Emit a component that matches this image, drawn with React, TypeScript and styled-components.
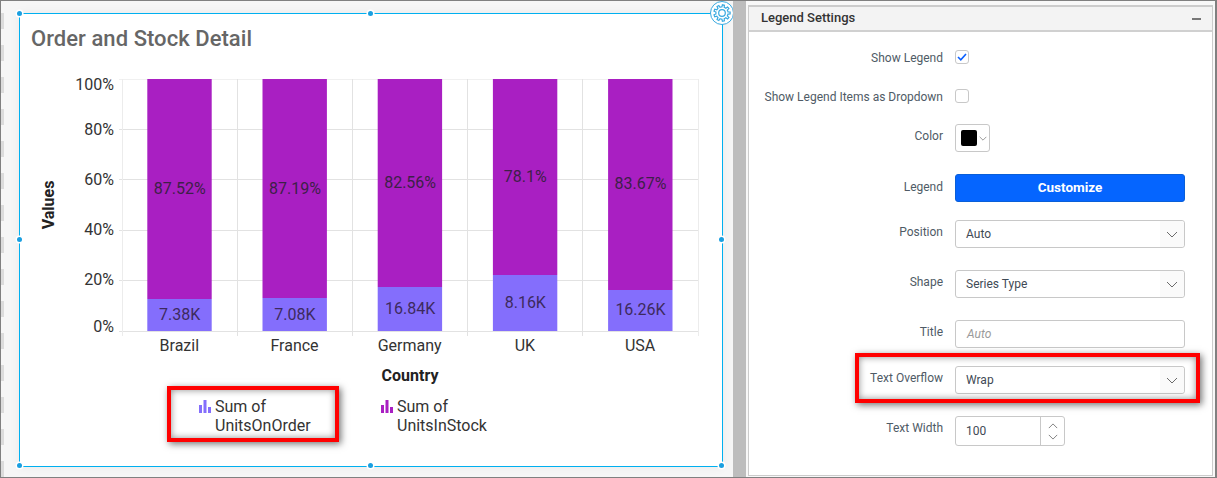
import React from "react";
import styled, { createGlobalStyle } from "styled-components";

const Global = createGlobalStyle`
  html, body { margin: 0; padding: 0; background: #fff; }
  body { font-family: Roboto, "Liberation Sans", sans-serif; overflow: hidden; }
  * { box-sizing: border-box; }
`;

const Frame = styled.div`
  width: 1217px; height: 478px;
  display: flex;
  border: 1px solid #808080;
  border-right-width: 2px;
  background: #f6f6f6;
  overflow: hidden;
`;
const Ruler = styled.div`
  flex: 0 0 3px; height: 100%;
  background: repeating-linear-gradient(to bottom, #f6f6f6 0 12px, #dcdcdc 12px 28px, #f6f6f6 28px 32px);
`;
const Canvas = styled.div`
  flex: 0 0 729px;
  padding: 12px 0 0 15px;
  position: relative;
  overflow: hidden;
`;
const Widget = styled.div`
  position: relative;
  width: 704px; height: 454px;
  background: #fff;
  border: 1px solid #00b0f0;
  box-shadow: 0 0 10px rgba(0,0,0,.06);
`;
const WidgetTitle = styled.h1`
  margin: 0; height: 56px;
  padding: 11px 0 0 11px;
  font: 500 22px/28px Roboto, sans-serif;
  letter-spacing: .05px;
  color: #666;
`;
const ChartSvg = styled.svg`
  display: block;
  text { font-family: Roboto, sans-serif; }
`;
const Legend = styled.div`
  display: flex;
  padding: 12px 0 0 179px;
`;
const LegendItem = styled.div`
  width: 182px;
  display: flex;
  gap: 4px;
  font: 400 16px/19px Roboto, sans-serif;
  color: #333;
`;
const LegendText = styled.span`
  width: 110px;
`;
const LegendIcon = styled.svg`
  flex: none; margin-top: 3px;
`;
const Handle = styled.span<{ $x: number; $y: number }>`
  position: absolute;
  left: ${(p) => p.$x}%; top: ${(p) => p.$y}%;
  width: 5px; height: 5px;
  margin: -3px 0 0 -3px;
  border-radius: 50%;
  background: #1a9fe0;
  box-shadow: 0 0 0 1.5px #fff;
`;
const GearBadge = styled.div`
  position: absolute;
  right: -12px; top: -13px;
  width: 24px; height: 24px;
  border-radius: 50%;
  background: #fff;
  border: 1px solid #39a9e0;
  display: flex; align-items: center; justify-content: center;
`;
const Highlight = styled.div<{ $x: number; $y: number; $w: number; $h: number }>`
  position: absolute;
  left: ${(p) => p.$x}px; top: ${(p) => p.$y}px;
  width: ${(p) => p.$w}px; height: ${(p) => p.$h}px;
  border: 4px solid #f00;
  box-shadow: 2px 2px 7px rgba(0,0,0,.55), inset 0 0 7px rgba(0,0,0,.45);
  pointer-events: none;
`;
const Splitter = styled.div`
  flex: 0 0 13px;
  background: #bdbdbd;
`;
const PanelWrap = styled.div`
  flex: 0 0 469px;
  padding: 4px 0 1px 2px;
  background: #f8f8f8;
`;
const Panel = styled.div`
  width: 465px; height: 100%;
  background: #fff;
  border: 1px solid #ccc;
  border-top-width: 2px;
`;
const PanelHeader = styled.div`
  height: 25px;
  background: #f3f3f3;
  border-bottom: 2px solid #d0d0d0;
  display: flex; align-items: center; justify-content: space-between;
  padding: 0 11px 1px 12px;
  font: 500 13px/16px Roboto, sans-serif;
  color: #333;
`;
const Collapse = styled.span`
  width: 9px; height: 2px; background: #777; margin-top: 2px;
`;
const Form = styled.div`
  display: flex; flex-direction: column;
`;
const Row = styled.div<{ $top: number }>`
  display: flex; align-items: center;
  margin-top: ${(p) => p.$top}px;
`;
const Label = styled.label<{ $up?: number; $down?: boolean }>`
  flex: 0 0 194px;
  text-align: right;
  font: 400 12px/14px Roboto, sans-serif;
  color: #4f5b66;
  padding-bottom: ${(p) => p.$up ?? 0}px;
  padding-top: ${(p) => (p.$down ? 1 : 0)}px;
  margin-bottom: ${(p) => (p.$down ? -1 : 0)}px;
  margin-right: 12px;
  white-space: nowrap;
`;
const Check = styled.span`
  width: 14px; height: 14px;
  border: 1px solid #c8c8c8;
  border-radius: 3px;
  background: #fff;
  display: flex; align-items: center; justify-content: center;
`;
const ColorPicker = styled.div`
  width: 35px; height: 28px;
  border: 1px solid #c8c8c8;
  border-radius: 3px;
  display: flex; align-items: center;
  padding-left: 5px; gap: 2px;
`;
const Swatch = styled.span`
  width: 16px; height: 16px;
  background: #000;
  border-radius: 2px;
`;
const Primary = styled.button`
  width: 230px; height: 28px;
  border: 1px solid #0a5fd8;
  border-radius: 3px;
  background: #0565ff;
  color: #fff;
  font: 700 13.5px/16px Roboto, sans-serif;
  padding: 0 0 2px;
`;
const Select = styled.div`
  width: 230px; height: 28px;
  border: 1px solid #c8c8c8;
  border-radius: 3px;
  display: flex; align-items: center;
  font: 400 12px/16px Roboto, sans-serif;
  color: #3f4a55;
  padding-left: 10px;
`;
const SelectValue = styled.span`
  flex: 1;
`;
const Arrow = styled.span`
  flex: 0 0 24px; align-self: stretch;
  background: #fafafa;
  border-radius: 0 3px 3px 0;
  display: flex; align-items: center; justify-content: center;
`;
const Placeholder = styled.span`
  font-style: italic; color: #9a9a9a;
  padding-left: 1px;
`;
const Spinner = styled.div`
  width: 110px; height: 30px;
  border: 1px solid #c8c8c8;
  border-radius: 3px;
  display: flex; align-items: center;
  font: 400 12px/16px Roboto, sans-serif;
  color: #3f4a55;
  padding-left: 10px;
`;
const SpinButtons = styled.span`
  flex: 0 0 24px; align-self: stretch;
  border-left: 1px solid #c8c8c8;
  display: flex; flex-direction: column; align-items: center; justify-content: center; gap: 5px;
`;

const Chev = ({ up, w = 12, c = "#6b6b6b" }: { up?: boolean; w?: number; c?: string }) => (
  <svg width={w} height={w / 2 + 1} viewBox="0 0 12 7" fill="none" stroke={c} strokeWidth="1">
    <polyline points={up ? "1,6 6,1 11,6" : "1,1 6,6 11,1"} />
  </svg>
);

const BarIcon = ({ c }: { c: string }) => (
  <LegendIcon width="12" height="13" viewBox="0 0 12 13" fill={c}>
    <rect x="0" y="5" width="3" height="8" />
    <rect x="4.5" y="0" width="3" height="13" />
    <rect x="9" y="7" width="3" height="6" />
  </LegendIcon>
);

const gearPath = (() => {
  const teeth = 9;
  const pts: string[] = [];
  for (let i = 0; i < teeth; i++) {
    const a = (i / teeth) * Math.PI * 2;
    const step = (Math.PI * 2) / teeth;
    const seq: [number, number][] = [
      [6.1, a - step * 0.5],
      [6.1, a - step * 0.28],
      [8.2, a - step * 0.18],
      [8.2, a + step * 0.18],
      [6.1, a + step * 0.28],
    ];
    seq.forEach(([r, t]) => pts.push(`${(9 + r * Math.cos(t)).toFixed(2)},${(9 + r * Math.sin(t)).toFixed(2)}`));
  }
  return `M${pts.join("L")}Z`;
})();

const Gear = () => (
  <svg width="18" height="18" viewBox="0 0 18 18" fill="none" stroke="#39a9e0" strokeWidth="1.2">
    <path d={gearPath} />
    <circle cx="9" cy="9" r="3.3" />
  </svg>
);

const bars = [
  { name: "Brazil", x: 147.3, top: 299, pct: "87.52%", py: 194, k: "7.38K", ky: 320 },
  { name: "France", x: 262.5, top: 298, pct: "87.19%", py: 194, k: "7.08K", ky: 320 },
  { name: "Germany", x: 377.7, top: 287, pct: "82.56%", py: 188, k: "16.84K", ky: 314 },
  { name: "UK", x: 492.9, top: 275, pct: "78.1%", py: 182, k: "8.16K", ky: 308 },
  { name: "USA", x: 608.1, top: 290, pct: "83.67%", py: 189, k: "16.26K", ky: 315 },
];
const ticks = [
  { t: "100%", y: 79, ly: 89.5 },
  { t: "80%", y: 129.4, ly: 134.5 },
  { t: "60%", y: 179.8, ly: 184.5 },
  { t: "40%", y: 230.2, ly: 234.5 },
  { t: "20%", y: 280.6, ly: 285 },
  { t: "0%", y: 331, ly: 331.5 },
];
const vLines = [122, 237.2, 352.4, 467.6, 582.8, 698];

const Chart = () => (
  <ChartSvg width="702" height="315" viewBox="20 70 702 315">
    {ticks.map((t, i) => (
      <g key={t.t}>
        <line x1="119" x2="698" y1={Math.floor(t.y) + 0.5} y2={Math.floor(t.y) + 0.5} stroke={i === 0 ? "#f0f0f0" : "#e2e2e2"} />
        <text x="114" y={t.ly} textAnchor="end" fontSize="16" fill="#333">{t.t}</text>
      </g>
    ))}
    {vLines.map((x, i) => (
      <line key={x} x1={Math.floor(x) + 0.5} x2={Math.floor(x) + 0.5} y1="79" y2="336" stroke={i === 0 || i === 5 ? "#ececec" : "#e2e2e2"} />
    ))}
    {bars.map((b) => (
      <g key={b.name}>
        <rect x={b.x} y={79} width={64.4} height={b.top - 79} fill="#a91fc2" />
        <rect x={b.x} y={b.top} width={64.4} height={331 - b.top} fill="#846efc" />
        <text x={b.x + 32.4} y={b.py} textAnchor="middle" fontSize="16" fill="#3d2048">{b.pct}</text>
        <text x={b.x + 32.4} y={b.ky} textAnchor="middle" fontSize="16" fill="#3d2a5e">{b.k}</text>
        <text x={b.x + 32} y={351} textAnchor="middle" fontSize="16" fill="#333">{b.name}</text>
      </g>
    ))}
    <text x="410" y="381" textAnchor="middle" fontSize="16" fontWeight="700" fill="#222">Country</text>
    <text transform="translate(54 205) rotate(-90)" textAnchor="middle" fontSize="16" fontWeight="700" fill="#222">Values</text>
  </ChartSvg>
);

const handles = [
  [0, 0], [50, 0], [0, 50], [100, 50], [0, 100], [50, 100], [100, 100],
];

export default function App() {
  return (
    <>
      <Global />
      <Frame>
        <Ruler />
        <Canvas>
          <Widget>
            <WidgetTitle>Order and Stock Detail</WidgetTitle>
            <Chart />
            <Legend>
              <LegendItem>
                <BarIcon c="#846efc" />
                <LegendText>Sum of UnitsOnOrder</LegendText>
              </LegendItem>
              <LegendItem>
                <BarIcon c="#a91fc2" />
                <LegendText>Sum of UnitsInStock</LegendText>
              </LegendItem>
            </Legend>
            {handles.map(([x, y]) => (
              <Handle key={`${x}-${y}`} $x={x} $y={y} />
            ))}
            <GearBadge>
              <Gear />
            </GearBadge>
          </Widget>
        </Canvas>
        <Splitter />
        <PanelWrap>
          <Panel>
            <PanelHeader>
              <span>Legend Settings</span>
              <Collapse />
            </PanelHeader>
            <Form>
              <Row $top={18}>
                <Label $down>Show Legend</Label>
                <Check>
                  <svg width="10" height="8" viewBox="0 0 10 8" fill="none" stroke="#0a5fff" strokeWidth="1.6">
                    <polyline points="1,4 3.8,6.8 9,1" />
                  </svg>
                </Check>
              </Row>
              <Row $top={25}>
                <Label $down>Show Legend Items as Dropdown</Label>
                <Check />
              </Row>
              <Row $top={21}>
                <Label $up={4}>Color</Label>
                <ColorPicker>
                  <Swatch />
                  <Chev w={8} />
                </ColorPicker>
              </Row>
              <Row $top={22}>
                <Label $up={3}>Legend</Label>
                <Primary>Customize</Primary>
              </Row>
              <Row $top={18}>
                <Label $up={4}>Position</Label>
                <Select>
                  <SelectValue>Auto</SelectValue>
                  <Arrow><Chev /></Arrow>
                </Select>
              </Row>
              <Row $top={22}>
                <Label $up={4}>Shape</Label>
                <Select>
                  <SelectValue>Series Type</SelectValue>
                  <Arrow><Chev /></Arrow>
                </Select>
              </Row>
              <Row $top={22}>
                <Label $up={4}>Title</Label>
                <Select>
                  <Placeholder>Auto</Placeholder>
                </Select>
              </Row>
              <Row $top={18}>
                <Label $up={4}>Text Overflow</Label>
                <Select>
                  <SelectValue>Wrap</SelectValue>
                  <Arrow><Chev /></Arrow>
                </Select>
              </Row>
              <Row $top={22}>
                <Label $up={6}>Text Width</Label>
                <Spinner>
                  <SelectValue>100</SelectValue>
                  <SpinButtons>
                    <Chev up w={10} />
                    <Chev w={10} />
                  </SpinButtons>
                </Spinner>
              </Row>
            </Form>
          </Panel>
        </PanelWrap>
        <Highlight $x={167} $y={386} $w={172} $h={56} />
        <Highlight $x={855} $y={353} $w={345} $h={50} />
      </Frame>
    </>
  );
}
